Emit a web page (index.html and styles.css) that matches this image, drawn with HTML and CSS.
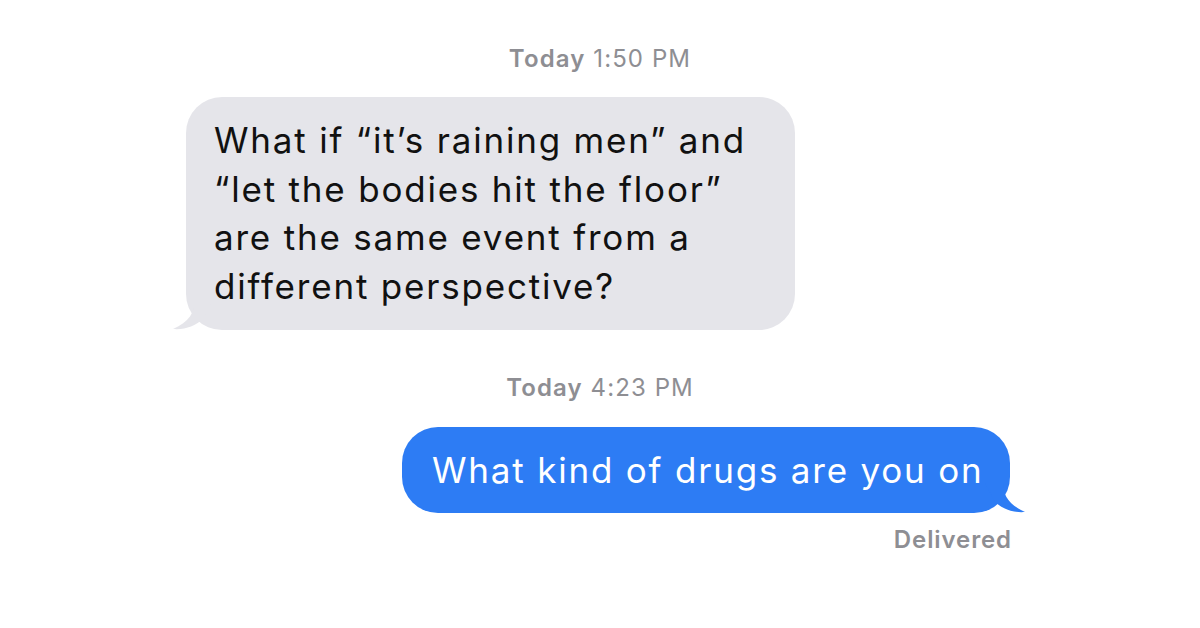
FILE: index.html
```html
<!DOCTYPE html>
<html lang="en">
<head>
    <meta charset="UTF-8">
    <meta name="viewport" content="width=device-width, initial-scale=1.0">
    <title>Messages</title>
    <link rel="stylesheet" href="styles.css">
</head>
<body>
<section class="thread">
    <div class="stamp"><b>Today</b> 1:50 PM</div>

    <div class="bubble received">
        What if “it’s raining men” and<br>
        “let the bodies hit the floor”<br>
        are the same event from a<br>
        different perspective?
        <svg class="tail tail-left" width="40" height="30" viewBox="0 0 40 30">
            <path d="M22 0 C22 12 16 22 0 29 C12 30 22 26 30 19 L40 0 Z" fill="#e5e5ea"/>
        </svg>
    </div>

    <div class="stamp stamp-second"><b>Today</b> 4:23 PM</div>

    <div class="bubble sent">
        What kind of drugs are you on
        <svg class="tail tail-right" width="40" height="30" viewBox="0 0 40 30">
            <path d="M18 0 C18 12 24 22 40 29 C28 30 18 26 10 19 L0 0 Z" fill="#2d7cf4"/>
        </svg>
    </div>

    <div class="delivered">Delivered</div>
</section>
</body>
</html>
```

FILE: styles.css
```css
body {
    margin: 0;
    padding: 0;
    background-color: #fff;
    font-family: Inter, "Liberation Sans", Arial, sans-serif;
}
.thread {
    display: flex;
    flex-direction: column;
    padding-top: 44px;
}
.stamp {
    align-self: center;
    color: #8e8e93;
    font-size: 24px;
    letter-spacing: 1.1px;
    line-height: 30px;
}
.stamp b {
    font-weight: 600;
}
.stamp-second {
    margin-top: 43px;
}
.bubble {
    position: relative;
    font-size: 35px;
    letter-spacing: 1.8px;
    line-height: 48.5px;
    border-radius: 36px;
}
.received {
    margin-top: 23px;
    margin-left: 186px;
    width: 609px;
    box-sizing: border-box;
    padding: 19px 20px 20px 28px;
    background-color: #e5e5ea;
    color: #111;
}
.sent {
    margin-top: 24px;
    margin-left: 402px;
    width: 608px;
    box-sizing: border-box;
    padding: 19px 20px 18px 30px;
    background-color: #2d7cf4;
    color: #fff;
}
.tail {
    position: absolute;
    bottom: 0;
}
.tail-left {
    left: -13px;
}
.tail-right {
    right: -15px;
}
.delivered {
    align-self: flex-end;
    margin-right: 188px;
    margin-top: 12px;
    color: #8e8e93;
    font-size: 24px;
    font-weight: 600;
    letter-spacing: 0.9px;
    line-height: 30px;
}
```
